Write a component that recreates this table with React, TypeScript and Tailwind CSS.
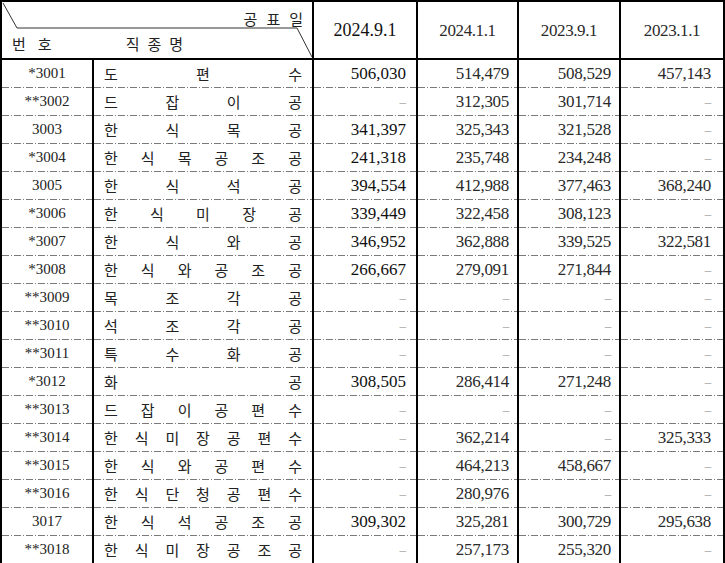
const rows: [string, string, (string | null)[]][] = [
  ["*3001", "도편수", ["506,030", "514,479", "508,529", "457,143"]],
  ["**3002", "드잡이공", [null, "312,305", "301,714", null]],
  ["3003", "한식목공", ["341,397", "325,343", "321,528", null]],
  ["*3004", "한식목공조공", ["241,318", "235,748", "234,248", null]],
  ["3005", "한식석공", ["394,554", "412,988", "377,463", "368,240"]],
  ["*3006", "한식미장공", ["339,449", "322,458", "308,123", null]],
  ["*3007", "한식와공", ["346,952", "362,888", "339,525", "322,581"]],
  ["*3008", "한식와공조공", ["266,667", "279,091", "271,844", null]],
  ["**3009", "목조각공", [null, null, null, null]],
  ["**3010", "석조각공", [null, null, null, null]],
  ["**3011", "특수화공", [null, null, null, null]],
  ["*3012", "화공", ["308,505", "286,414", "271,248", null]],
  ["**3013", "드잡이공편수", [null, null, null, null]],
  ["**3014", "한식미장공편수", [null, "362,214", null, "325,333"]],
  ["**3015", "한식와공편수", [null, "464,213", "458,667", null]],
  ["**3016", "한식단청공편수", [null, "280,976", null, null]],
  ["3017", "한식석공조공", ["309,302", "325,281", "300,729", "295,638"]],
  ["**3018", "한식미장공조공", [null, "257,173", "255,320", null]],
];

const dates = ["2024.9.1", "2024.1.1", "2023.9.1", "2023.1.1"];

// outer box of the four value columns
const valueCols = [
  "w-[104px] border-r-2 border-black",
  "w-[101px] border-r-2 border-black",
  "w-[102px] border-r-2 border-black",
  "w-[102px]",
];

// text inside them
const valueText = [
  "pr-[10px] text-[17px] text-[#111]",
  "pr-[8px] text-[17px] tracking-[-0.3px] text-[#2a2a2a]",
  "pr-[8px] text-[17px] tracking-[-0.3px] text-[#2a2a2a]",
  "pr-[12px] text-[17px] tracking-[-0.3px] text-[#2a2a2a]",
];

const Dashed = () => (
  <div className="h-px w-full bg-[repeating-linear-gradient(90deg,#7a7a7a_0px,#7a7a7a_7px,transparent_7px,transparent_9px,#7a7a7a_9px,#7a7a7a_10px,transparent_10px,transparent_12px)]" />
);

const Row = ({ code, name, values }: { code: string; name: string; values: (string | null)[] }) => (
  <div className="flex h-[28px]">
    <div className="flex w-[92px] flex-col border-r-2 border-black">
      <div className="flex flex-1 items-center justify-center text-[15px] text-[#222]">{code}</div>
      <Dashed />
    </div>
    <div className="flex w-[220px] flex-col border-r-2 border-black">
      <div className="flex flex-1 items-center justify-between px-[10px] font-['Noto_Sans_CJK_KR',sans-serif] text-[15px] text-[#222]">
        {name.split("").map((c, i) => (
          <span key={i}>{c}</span>
        ))}
      </div>
      <Dashed />
    </div>
    {values.map((v, i) => (
      <div key={i} className={`flex flex-col ${valueCols[i]}`}>
        <div className={`flex flex-1 items-center justify-end ${valueText[i]}`}>
          {v ? v : <span className="text-[13px] text-[#999]">–</span>}
        </div>
        <Dashed />
      </div>
    ))}
  </div>
);

export default function App() {
  return (
    <div className="h-[563px] w-[725px] overflow-hidden bg-white">
      <div className="w-[725px] border-x-2 border-t-2 border-black font-['Liberation_Serif','Noto_Sans_CJK_KR',serif] leading-none">
        {/* header */}
        <div className="flex h-[58px] border-b-2 border-black">
          <div className="relative flex w-[312px] flex-col border-r-2 border-black pt-[6px] font-['Noto_Sans_CJK_KR',sans-serif] text-[15px] text-[#222]">
            <svg className="absolute inset-0" width="310" height="56" viewBox="0 0 310 56">
              <polyline points="1,1 15,26 295,26 310,55" fill="none" stroke="#333" strokeWidth="1" />
            </svg>
            <div className="flex h-[20px] items-center justify-end gap-[9px] pr-[9px]">
              <span>공</span>
              <span>표</span>
              <span>일</span>
            </div>
            <div className="mt-[5px] flex h-[20px] items-center pl-[10px]">
              <div className="flex gap-[12px]">
                <span>번</span>
                <span>호</span>
              </div>
              <div className="ml-[74px] flex gap-[8px]">
                <span>직</span>
                <span>종</span>
                <span>명</span>
              </div>
            </div>
          </div>
          {dates.map((d, i) => (
            <div
              key={d}
              className={`flex items-center justify-center ${valueCols[i]} ${
                i === 0 ? "text-[18px] text-[#111]" : "text-[17px] tracking-[-0.4px] text-[#2a2a2a]"
              }`}
            >
              {d}
            </div>
          ))}
        </div>
        {rows.map(([code, name, values]) => (
          <Row key={code} code={code} name={name} values={values} />
        ))}
      </div>
    </div>
  );
}
